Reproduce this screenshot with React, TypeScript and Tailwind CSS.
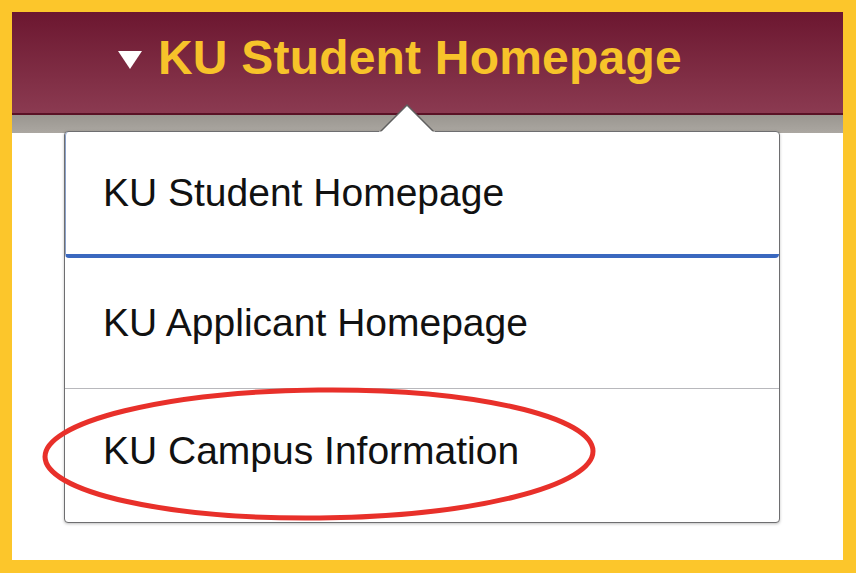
export default function App() {
  return (
    <div className="w-[856px] h-[573px] bg-[#fcc62b] pt-3 pl-3 pr-[13px] pb-[13px] font-['Liberation_Sans',Arial,sans-serif]">
      <div className="relative h-full bg-white flex flex-col">
        {/* maroon header */}
        <div className="h-[101px] shrink-0 bg-gradient-to-b from-[#6c1630] to-[#8b3a51] flex items-center pl-[106px] pb-[10px]">
          <svg width="24" height="18" viewBox="0 0 24 18" className="mr-[16px] mt-[4px]">
            <polygon points="0,0 24,0 12,18" fill="#ffffff" />
          </svg>
          <span className="text-[48px] leading-none font-bold text-[#f7c32a] tracking-[0.2px]">
            KU Student Homepage
          </span>
        </div>
        <div className="h-[2px] shrink-0 bg-[#5a1226]" />
        <div className="h-[18px] shrink-0 bg-gradient-to-b from-[#9a9690] to-[#aba7a1]" />

        {/* dropdown menu */}
        <div className="relative -mt-[2px] ml-[52px] w-[716px] h-[392px] bg-white border-[1.5px] border-[#6e6e70] rounded-[4px] shadow-[0_1px_3px_rgba(0,0,0,0.25)] flex flex-col">
          {/* caret */}
          <svg width="56" height="30" viewBox="0 0 56 30" className="absolute left-[314px] -top-[29px]">
            <polygon points="0,30 28,2 56,30" fill="#ffffff" stroke="#5f5f5f" strokeWidth="1.5" />
            <rect x="0" y="28.5" width="56" height="3" fill="#ffffff" />
          </svg>
          <div className="h-[126px] shrink-0 flex items-center pl-[37px] pt-[1px] border-l border-[#8aa0c8] border-b-4 border-b-[#3a68bf] rounded-[4px] text-[39px] text-[#111111]">
            KU Student Homepage
          </div>
          <div className="h-[131px] shrink-0 flex items-center pl-[38px] border-b-[1.5px] border-[#b8b8bc] text-[39px] text-[#111111]">
            KU Applicant Homepage
          </div>
          <div className="flex-1 flex items-center pl-[38px] pb-[8px] text-[39px] text-[#111111]">
            KU Campus Information
          </div>
        </div>

        {/* red annotation ellipse */}
        <svg width="570" height="150" viewBox="0 0 570 150" className="absolute left-[22px] top-[367px] pointer-events-none">
          <ellipse cx="285" cy="75" rx="274" ry="64" fill="none" stroke="#e8302a" strokeWidth="5" transform="rotate(-0.6 285 75)" />
        </svg>
      </div>
    </div>
  );
}
